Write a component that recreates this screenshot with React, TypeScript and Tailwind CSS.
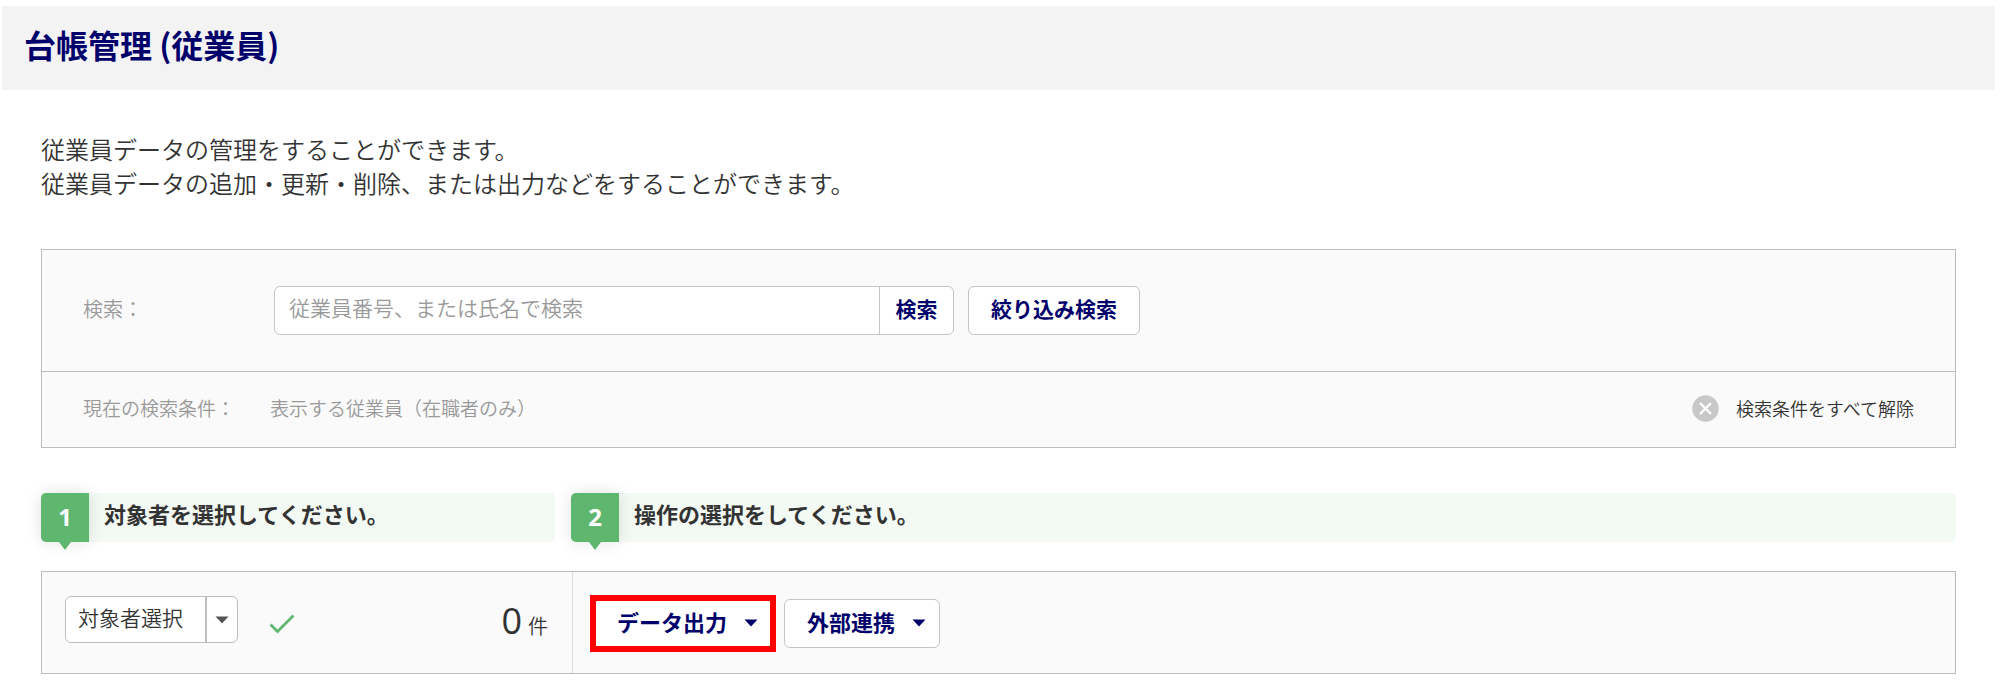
import React from "react";

function Caret({ className }: { className: string }) {
  return (
    <svg className={className} width="14" height="8" viewBox="0 0 14 8" aria-hidden="true">
      <path d="M0.5 0.5H13.5L7 7.5Z" fill="currentColor" />
    </svg>
  );
}

function Step({ number, children }: { number: number; children: React.ReactNode }) {
  return (
    <div className="flex h-[49px] rounded-[5px] bg-[#f3faf4]">
      <div className="relative flex w-12 shrink-0 items-center justify-center rounded-l-[5px] bg-[#5fb76f] pb-[2px] font-['Open_Sans','Noto_Sans_CJK_JP',sans-serif] text-[24px] font-bold text-white shadow-[0_0_16px_rgba(0,0,0,0.12)]">
        {number}
        <svg className="absolute top-full left-1/2 -translate-x-1/2" width="12" height="8" viewBox="0 0 12 8" aria-hidden="true">
          <path d="M0 0H12L6 8Z" fill="#5fb76f" />
        </svg>
      </div>
      <h2 className="pt-[2px] pl-[15px] text-[22px] leading-[36px] font-bold">{children}</h2>
    </div>
  );
}

function ActionButton({ children }: { children: React.ReactNode }) {
  return (
    <button
      type="button"
      className="flex h-[49px] items-center rounded-[6px] border border-[#c4c4c4] bg-white pr-[13px] pb-1 pl-[22px] text-[22px] font-bold text-[#00006b]"
    >
      {children}
      <Caret className="ml-[17px] translate-y-px" />
    </button>
  );
}

export default function App() {
  return (
    <div className="bg-white pt-[6px] pb-[22px] font-['Noto_Sans_CJK_JP',sans-serif] font-[350] text-[#333]">
      <header className="mr-[5px] ml-[2px] flex h-[84px] items-center bg-[#f3f3f3] px-[22px] pb-2">
        <h1 className="text-[32px] leading-[48px] font-bold text-[#00006b]">台帳管理 (従業員)</h1>
      </header>

      <main className="pt-[42px] pr-11 pl-[41px]">
        <p className="text-[24px] leading-[34px]">
          従業員データの管理をすることができます。
          <br />
          従業員データの追加・更新・削除、または出力などをすることができます。
        </p>

        <section className="mt-[49px] border border-[#bdbdbd] bg-[#fafafa] text-[#999]">
          <form className="flex items-center border-b border-[#bdbdbd] px-[41px] py-9" onSubmit={(e) => e.preventDefault()}>
            <label htmlFor="keyword" className="w-[191px] pb-[3px] text-[20px]">
              検索：
            </label>
            <div className="flex h-[49px] w-[680px] rounded-[6px] border border-[#c4c4c4] bg-white">
              <input
                id="keyword"
                type="text"
                placeholder="従業員番号、または氏名で検索"
                className="min-w-0 flex-1 rounded-l-[6px] px-[14px] pb-[6px] text-[21px] text-[#333] outline-none placeholder:text-[#999]"
              />
              <button type="submit" className="w-[74px] rounded-r-[6px] border-l border-[#c4c4c4] pb-1 text-[21px] font-bold text-[#00006b]">
                検索
              </button>
            </div>
            <button type="button" className="ml-[14px] h-[49px] rounded-[6px] border border-[#c4c4c4] bg-white px-[22px] pb-1 text-[21px] font-bold text-[#00006b]">
              絞り込み検索
            </button>
          </form>
          <div className="flex h-[75px] items-center pr-[41px] pb-[2px] pl-[41px] text-[19px]">
            <span className="w-[187px]">現在の検索条件：</span>
            <span>表示する従業員（在職者のみ）</span>
            <button type="button" className="ml-auto flex items-center gap-[17px] text-[18px] text-[#333]">
              <svg width="27" height="27" viewBox="0 0 27 27" aria-hidden="true">
                <circle cx="13.5" cy="13.5" r="13.2" fill="#c8c8c8" />
                <path d="M8 8L19 19M19 8L8 19" stroke="#fff" strokeWidth="2.4" />
              </svg>
              検索条件をすべて解除
            </button>
          </div>
        </section>

        <div className="mt-[45px] grid grid-cols-[514px_1fr] gap-4">
          <Step number={1}>対象者を選択してください。</Step>
          <Step number={2}>操作の選択をしてください。</Step>
        </div>

        <section className="mt-[29px] grid h-[103px] grid-cols-[531px_1fr] border border-[#bdbdbd] bg-[#fafafa]">
          <div className="flex items-center border-r border-[#ddd] pt-[2px] pr-6 pl-[23px]">
            <div className="mb-2 flex h-[47px] rounded-[6px] border border-[#bdbdbd] bg-white">
              <button type="button" className="w-[139px] pb-1 pl-3 text-left text-[21px]">
                対象者選択
              </button>
              <button type="button" aria-label="対象者選択メニュー" className="flex w-8 items-center justify-center border-l-2 border-[#bdbdbd] text-[#555]">
                <Caret className="" />
              </button>
            </div>
            <svg className="ml-[31px]" width="26" height="20" viewBox="0 0 26 20" fill="none" aria-hidden="true">
              <path d="M1.5 10.5L8.5 17.5L24.5 1.5" stroke="#5fb76f" strokeWidth="2.8" />
            </svg>
            <p className="ml-auto flex items-baseline gap-[6px] leading-[48px]">
              <span className="font-['Open_Sans',sans-serif] text-[36px] font-normal">0</span>
              <span className="text-[20px]">件</span>
            </p>
          </div>
          <div className="flex items-center gap-3 pt-[2px] pl-[21px]">
            <div className="relative">
              <ActionButton>データ出力</ActionButton>
              <div className="pointer-events-none absolute -inset-1 border-[6px] border-[#f00]" />
            </div>
            <ActionButton>外部連携</ActionButton>
          </div>
        </section>
      </main>
    </div>
  );
}
